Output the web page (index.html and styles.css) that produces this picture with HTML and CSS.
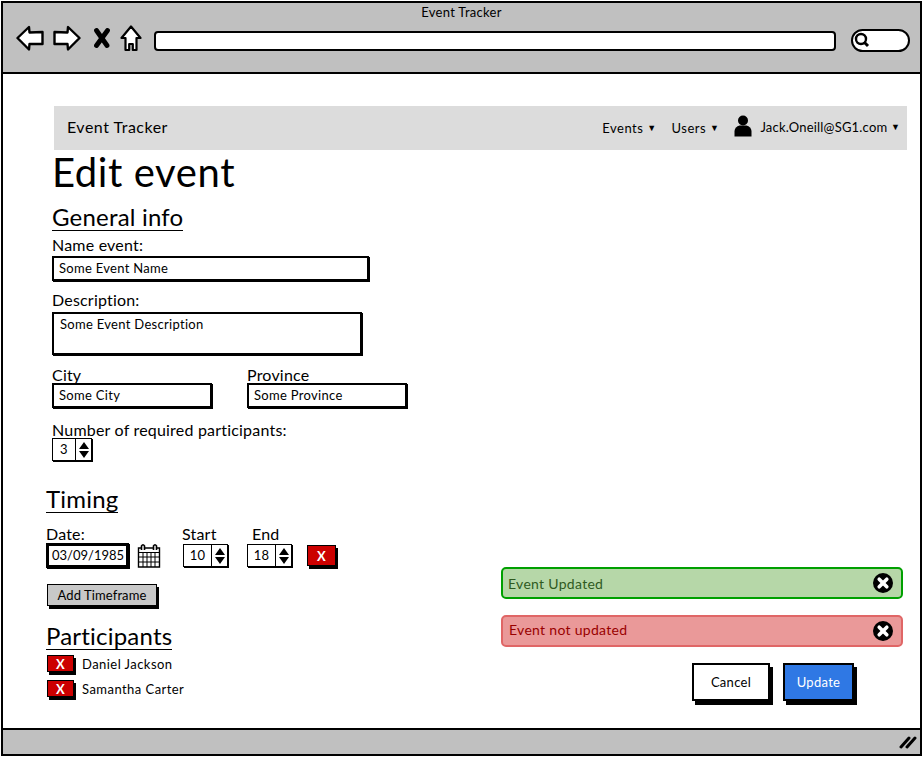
FILE: index.html
```html
<!DOCTYPE html>
<html lang="en">

<head>
    <title>Event Tracker</title>
    <link rel="stylesheet" href="styles.css">
</head>

<body>
    <div class="window">
        <div class="chrome">
            <div class="chrome-title">Event Tracker</div>
            <div class="toolbar">
                <svg class="icon-back" width="28" height="26" viewBox="0 0 28 26"><path d="M1.5 13 L13 2 L13.5 7.5 L26.5 7 L26.5 19 L13.5 19 L13 24.5 Z" fill="#fff" stroke="#000" stroke-width="2.4" stroke-linejoin="round"/></svg>
                <svg class="icon-forward" width="28" height="26" viewBox="0 0 28 26"><path d="M26.5 13 L15 2 L14.5 7.5 L1.5 7 L1.5 19 L14.5 19 L15 24.5 Z" fill="#fff" stroke="#000" stroke-width="2.4" stroke-linejoin="round"/></svg>
                <svg class="icon-stop" width="18" height="20" viewBox="0 0 18 20"><path d="M3.5 2.5 L14 17.5 M14.5 2.5 L3.5 17.5" stroke="#000" stroke-width="4.8" stroke-linecap="round"/></svg>
                <svg class="icon-home" width="22" height="27" viewBox="0 0 22 27"><path d="M11 1.5 L20.5 13 L16.5 13 L16.5 25 L12.8 25 L12.8 19 L9.2 19 L9.2 25 L5.5 25 L5.5 13 L1.5 13 Z" fill="#fff" stroke="#000" stroke-width="2.2" stroke-linejoin="round"/></svg>
                <div class="url-bar"></div>
                <div class="search-pill">
                    <svg width="16" height="16" viewBox="0 0 16 16"><circle cx="7" cy="7" r="5" fill="#fff" stroke="#000" stroke-width="2.4"/><path d="M10 10 L14 14" stroke="#000" stroke-width="3"/></svg>
                </div>
            </div>
        </div>

        <div class="page">
            <div class="navbar">
                <div class="brand">Event Tracker</div>
                <div class="nav-links">
                    <span class="nav-item">Events <i class="caret">▼</i></span>
                    <span class="nav-item">Users <i class="caret">▼</i></span>
                    <svg class="icon-user" width="18" height="22" viewBox="0 0 18 22"><circle cx="9" cy="5.5" r="5"/><path d="M0.5 21.5 L0.5 16 Q1 11.5 5.5 10.5 L12.5 10.5 Q17 11.5 17.5 16 L17.5 21.5 Z"/></svg>
                    <span class="nav-item nav-user">Jack.Oneill@SG1.com <i class="caret">▼</i></span>
                </div>
            </div>

            <div class="columns">
                <div class="form-col">
                    <div class="general">
                        <h1>Edit event</h1>
                        <h2>General info</h2>
                        <label class="label label-name">Name event:</label>
                        <div class="input input-name">Some Event Name</div>
                        <label class="label label-desc">Description:</label>
                        <div class="input input-desc">Some Event Description</div>
                        <div class="place-row">
                            <div>
                                <label class="label">City</label>
                                <div class="input input-place">Some City</div>
                            </div>
                            <div>
                                <label class="label">Province</label>
                                <div class="input input-place">Some Province</div>
                            </div>
                        </div>
                        <label class="label label-number">Number of required participants:</label>
                        <div class="spinner spinner-small">
                            <span class="spinner-value">3</span>
                            <span class="spinner-arrows"><svg width="12" height="18" viewBox="0 0 12 18"><path d="M6 1 L11 8 L1 8 Z M6 17 L11 10 L1 10 Z"/></svg></span>
                        </div>
                    </div>

                    <h2 class="timing-head">Timing</h2>
                    <div class="timing-row">
                        <div class="time-date">
                            <label class="label">Date:</label>
                            <div class="date-line">
                                <div class="input input-date">03/09/1985</div>
                                <svg class="icon-calendar" width="24" height="25" viewBox="0 0 24 25">
                                    <path d="M1.5 5 H22.5 V24 H1.5 Z" fill="#fff" stroke="#000" stroke-width="1.4"/>
                                    <path d="M1.5 9.5 H22.5 M1.5 14 H22.5 M1.5 19 H22.5 M6 9.5 V24 M10 9.5 V24 M14 9.5 V24 M18 9.5 V24" stroke="#000" stroke-width="1" fill="none"/>
                                    <path d="M4.5 7 V3 Q6 0.5 7.5 3 V7 M16.5 7 V3 Q18 0.5 19.5 3 V7" stroke="#000" stroke-width="1.6" fill="#fff"/>
                                </svg>
                            </div>
                        </div>
                        <div class="time-start">
                            <label class="label">Start</label>
                            <div class="spinner">
                                <span class="spinner-value">10</span>
                                <span class="spinner-arrows"><svg width="12" height="18" viewBox="0 0 12 18"><path d="M6 1 L11 8 L1 8 Z M6 17 L11 10 L1 10 Z"/></svg></span>
                            </div>
                        </div>
                        <div class="time-end">
                            <label class="label">End</label>
                            <div class="spinner">
                                <span class="spinner-value">18</span>
                                <span class="spinner-arrows"><svg width="12" height="18" viewBox="0 0 12 18"><path d="M6 1 L11 8 L1 8 Z M6 17 L11 10 L1 10 Z"/></svg></span>
                            </div>
                        </div>
                        <button class="btn-x btn-x-large">X</button>
                    </div>
                    <button class="btn-add">Add Timeframe</button>

                    <h2 class="participants-head">Participants</h2>
                    <div class="participant"><button class="btn-x">X</button><span>Daniel Jackson</span></div>
                    <div class="participant"><button class="btn-x">X</button><span>Samantha Carter</span></div>
                </div>

                <div class="side-col">
                    <div class="alert alert-ok">
                        <span>Event Updated</span>
                        <svg width="22" height="22" viewBox="0 0 22 22"><circle cx="11" cy="11" r="10"/><path d="M7.2 7.2 L14.8 14.8 M14.8 7.2 L7.2 14.8" stroke="#fff" stroke-width="3.6" stroke-linecap="round"/></svg>
                    </div>
                    <div class="alert alert-bad">
                        <span>Event not updated</span>
                        <svg width="22" height="22" viewBox="0 0 22 22"><circle cx="11" cy="11" r="10"/><path d="M7.2 7.2 L14.8 14.8 M14.8 7.2 L7.2 14.8" stroke="#fff" stroke-width="3.6" stroke-linecap="round"/></svg>
                    </div>
                    <div class="actions">
                        <button class="btn-cancel">Cancel</button>
                        <button class="btn-update">Update</button>
                    </div>
                </div>
            </div>
        </div>

        <div class="statusbar">
            <svg width="18" height="14" viewBox="0 0 18 14"><path d="M2 12 L10 3 M8 12 L16 3" stroke="#000" stroke-width="3" stroke-linecap="round"/></svg>
        </div>
    </div>
</body>

</html>
```

FILE: styles.css
```css
html,
body {
    margin: 0;
    padding: 0;
    background-color: white;
    color: black;
    font-family: 'Lato', 'Noto Sans', sans-serif;
    letter-spacing: 0.3px;
    overflow: hidden;
}

button {
    letter-spacing: inherit;
}

.window {
    width: 921px;
    height: 755px;
    margin: 1px 0 0 1px;
    box-sizing: border-box;
    border: 2px solid black;
    display: flex;
    flex-direction: column;
}

/* browser chrome */
.chrome {
    height: 71px;
    flex: none;
    box-sizing: border-box;
    background-color: #c0c0c0;
    border-bottom: 2px solid black;
}

.chrome-title {
    height: 20px;
    line-height: 19px;
    text-align: center;
    font-size: 13px;
}

.toolbar {
    display: flex;
    align-items: center;
    padding: 0 10px 0 13px;
    height: 30px;
}

.icon-forward {
    margin-left: 9px;
}

.icon-stop {
    margin-left: 12px;
}

.icon-home {
    margin-left: 9px;
}

.url-bar {
    width: 682px;
    height: 20px;
    margin: 6px 0 0 12px;
    box-sizing: border-box;
    background-color: white;
    border: 2px solid black;
    border-radius: 4px;
}

.search-pill {
    width: 59px;
    height: 23px;
    margin: 4px 0 0 15px;
    box-sizing: border-box;
    background-color: white;
    border: 2px solid black;
    border-radius: 12px;
    display: flex;
    align-items: center;
    padding-left: 1px;
}

/* page */
.page {
    flex: 1;
    min-height: 0;
    padding: 32px 0 0 43px;
    display: flex;
    flex-direction: column;
}

.navbar {
    width: 853px;
    height: 44px;
    margin-left: 8px;
    padding: 0 7px 0 13px;
    box-sizing: border-box;
    flex: none;
    background-color: #dcdcdc;
    display: flex;
    align-items: center;
    justify-content: space-between;
}

.brand {
    font-size: 16px;
    letter-spacing: 0.5px;
    padding-bottom: 4px;
}

.nav-links {
    display: flex;
    align-items: center;
    font-size: 13px;
}

.nav-item {
    margin-right: 15px;
    letter-spacing: 0.5px;
}

.nav-user {
    margin: -3px 0 0 8px;
    letter-spacing: 0.2px;
}

.caret {
    font-style: normal;
    font-size: 9px;
    vertical-align: 2px;
}

.icon-user {
    margin-bottom: 5px;
}

.columns {
    flex: 1;
    display: flex;
    min-height: 0;
}

.form-col {
    width: 455px;
    flex: none;
}

.general {
    margin-left: 6px;
}

h1 {
    margin: 0;
    height: 48px;
    line-height: 44px;
    font-size: 40px;
    font-weight: 400;
    letter-spacing: 0.6px;
}

h2 {
    margin: 6px 0 0 0;
    width: fit-content;
    height: 26px;
    line-height: 26px;
    font-size: 24px;
    font-weight: 400;
    letter-spacing: 0.2px;
    border-bottom: 1px solid black;
}

.label {
    display: block;
    height: 19px;
    line-height: 19px;
    font-size: 16px;
    letter-spacing: 0.2px;
}

.label-name {
    margin-top: 4px;
}

.label-desc {
    margin-top: 9px;
}

.label-number {
    margin-top: 12px;
    height: 18px;
}

.input {
    box-sizing: border-box;
    background-color: white;
    border: 2px solid black;
    box-shadow: 1px 1px 0 black;
    font-size: 13px;
    padding: 0 5px 2px;
    display: flex;
    align-items: center;
}

.input-name {
    width: 317px;
    height: 25px;
    margin-top: 2px;
}

.input-desc {
    width: 310px;
    height: 43px;
    margin-top: 3px;
    align-items: flex-start;
    padding: 2px 6px 0;
}

.place-row {
    display: flex;
    gap: 35px;
    margin-top: 9px;
}

.place-row .label {
    line-height: 21px;
}

.input-place {
    width: 160px;
    height: 25px;
}

.spinner {
    width: 45px;
    height: 23px;
    box-sizing: border-box;
    border: 1.5px solid black;
    box-shadow: 1px 1px 0 black;
    display: flex;
    font-size: 13px;
    background-color: white;
}

.spinner-small {
    width: 40px;
}

.spinner-value {
    flex: 1;
    text-align: center;
    line-height: 20px;
}

.spinner-arrows {
    width: 15px;
    border-left: 1.5px solid black;
    display: flex;
    align-items: center;
    justify-content: center;
}

.timing-head {
    margin-top: 25px;
}

.timing-row {
    display: flex;
    align-items: flex-start;
    margin-top: 11px;
}

.date-line {
    display: flex;
    align-items: center;
    gap: 8px;
}

.input-date {
    width: 83px;
    height: 25px;
    border-width: 3px;
    padding: 0 3px 1px;
    letter-spacing: 0;
}

.time-date {
    width: 136px;
    flex: none;
}

.time-start {
    width: 65px;
    flex: none;
}

.time-start .spinner {
    margin: 1px 0 0 1px;
}

.time-end {
    width: 60px;
    flex: none;
}

.time-end .label {
    padding-left: 5px;
}

.time-end .spinner {
    margin-top: 1px;
}

.btn-x {
    width: 27px;
    height: 17px;
    padding: 0;
    box-sizing: border-box;
    background-color: #cc0000;
    color: white;
    border: 1.5px solid black;
    box-shadow: 2px 3px 0 black;
    font-family: inherit;
    font-weight: 700;
    font-size: 13px;
    line-height: 12px;
}

.btn-x-large {
    width: 29px;
    height: 21px;
    margin-top: 21px;
}

.btn-add {
    display: block;
    width: 110px;
    height: 22px;
    margin: 16px 0 0 1px;
    padding: 0;
    box-sizing: border-box;
    background-color: #c8c8c8;
    border: 1.5px solid black;
    box-shadow: 2px 3px 0 black;
    font-family: inherit;
    font-size: 13px;
    letter-spacing: 0.1px;
}

.participants-head {
    margin-top: 17px;
}

.participant {
    display: flex;
    align-items: center;
    height: 17px;
    margin: 8px 0 0 1px;
    font-size: 13px;
    letter-spacing: 0.45px;
    gap: 8px;
}

.participants-head + .participant {
    margin-top: 5px;
}

/* right side */
.side-col {
    width: 402px;
    flex: none;
    display: flex;
    flex-direction: column;
    justify-content: flex-end;
    padding-bottom: 26px;
}

.alert {
    height: 32px;
    box-sizing: border-box;
    border-radius: 5px;
    display: flex;
    align-items: center;
    justify-content: space-between;
    padding: 0 7px 0 5px;
    font-size: 14px;
}

.alert-ok {
    background-color: #b6d7a8;
    border: 2px solid #00a000;
    color: #2f5a1f;
}

.alert-bad {
    margin-top: 16px;
    padding-left: 6px;
    background-color: #ea9999;
    border: 2px solid #e06666;
    color: #990000;
}

.alert-bad span {
    margin-top: -3px;
}

.actions {
    display: flex;
    justify-content: flex-end;
    gap: 13px;
    margin: 16px 49px 1px 0;
}

.actions button {
    height: 38px;
    padding: 0;
    box-sizing: border-box;
    border: 2px solid black;
    box-shadow: 3px 4px 0 black;
    font-family: inherit;
    font-size: 13px;
}

.btn-cancel {
    width: 78px;
    background-color: white;
}

.btn-update {
    width: 71px;
    background-color: #2f78e4;
    color: white;
}

.statusbar {
    height: 26px;
    flex: none;
    box-sizing: border-box;
    background-color: #c0c0c0;
    border-top: 2px solid black;
    display: flex;
    justify-content: flex-end;
    align-items: center;
    padding-right: 3px;
}
```
